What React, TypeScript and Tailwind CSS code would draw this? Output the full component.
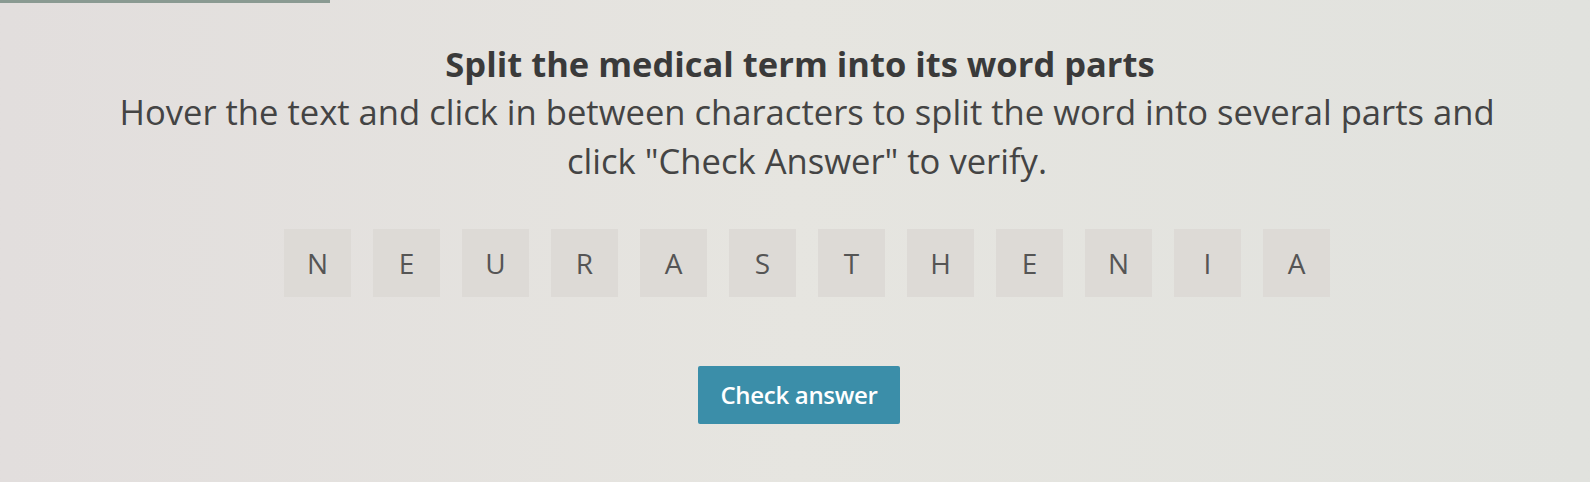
import { useState } from "react";

const WORD = "NEURASTHENIA";

export default function App() {
  // indexes after which the word is split
  const [splits, setSplits] = useState<number[]>([]);

  const toggle = (i: number) =>
    setSplits((s) => (s.includes(i) ? s.filter((x) => x !== i) : [...s, i]));

  return (
    <div className="min-h-[482px] w-full bg-gradient-to-r from-[#e2dedd] via-[#e6e5e0] to-[#e1e2de] font-['Open_Sans',sans-serif] text-[#3f3f3f]">
      <div className="h-[3px] w-[330px] bg-[#8a9a92]" />
      <div className="flex flex-col items-center pt-[41px]">
        <h1 className="ml-[10px] text-[34.5px] font-bold leading-[40px] text-[#3a3a3a]">
          Split the medical term into its word parts
        </h1>
        <p className="ml-[24px] mt-[3px] w-[1400px] text-center text-[34.6px] leading-[49px] text-[#444]">
          Hover the text and click in between characters to split the word into several parts and click "Check Answer" to verify.
        </p>

        <div className="ml-[24px] mt-[44px] flex items-center">
          {WORD.split("").map((ch, i) => (
            <div key={i} className="flex items-center">
              <div className="flex h-[68px] w-[67px] items-center justify-center bg-[#dddad6] text-[28px] text-[#555]">
                {ch}
              </div>
              {i < WORD.length - 1 && (
                <button
                  onClick={() => toggle(i)}
                  className="flex h-[68px] w-[22px] items-center justify-center"
                >
                  {splits.includes(i) && <span className="h-[40px] w-[2px] bg-[#3a8fa8]" />}
                </button>
              )}
            </div>
          ))}
        </div>

        <button className="ml-[8px] mt-[69px] h-[58px] w-[202px] rounded-[2px] bg-[#3b8ea9] text-[24px] font-semibold tracking-[-0.3px] text-white">
          Check answer
        </button>
      </div>
    </div>
  );
}
